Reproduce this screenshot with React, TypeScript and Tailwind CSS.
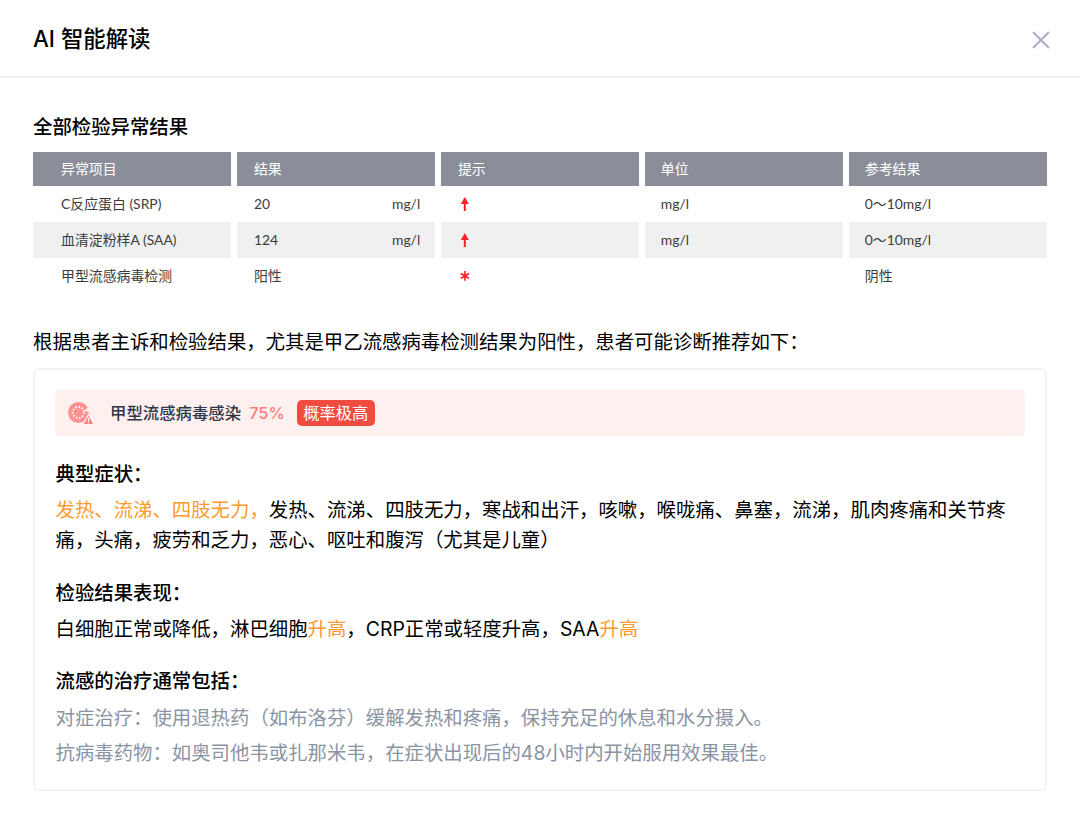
const heads = ["异常项目", "结果", "提示", "单位", "参考结果"];

function Up() {
  return (
    <svg width="10" height="14" viewBox="0 0 10 14" className="block -mt-[1px]">
      <path d="M4.8 0 L8.8 7 L5.8 7 L5.8 14 L3.8 14 L3.8 7 L0.8 7 Z" fill="#ff1f2a" />
    </svg>
  );
}

function Star() {
  return <span className="block text-[28px] leading-none font-bold text-[#ff1f2a] h-[16px] -mt-[3px] -ml-[1px]">*</span>;
}

function Row({ a, b, unit, flag, c, d, alt }: { a: string; b: string; unit?: string; flag: React.ReactNode; c: string; d: string; alt?: boolean }) {
  const cell = `h-9 flex items-center ${alt ? "bg-[#f0f0f0]" : ""}`;
  return (
    <>
      <div className={`${cell} pl-[28px]`}>{a}</div>
      <div className={`${cell} pl-[17px] pr-[15px] justify-between`}>
        <span>{b}</span>
        {unit && <span>{unit}</span>}
      </div>
      <div className={`${cell} pl-[19px]`}>{flag}</div>
      <div className={`${cell} pl-[16px]`}>{c}</div>
      <div className={`${cell} pl-[16px]`}>{d}</div>
    </>
  );
}

export default function App() {
  return (
    <div className="w-[1080px] h-[824px] bg-white font-['Inter','Noto_Sans_CJK_SC',sans-serif] text-black overflow-hidden">
      <header className="h-[78px] border-b-2 border-[#f0f1f4] pl-[33px] pr-[29px] flex items-center justify-between">
        <h1 className="text-[22.4px] font-medium leading-none mt-[3px]">AI 智能解读</h1>
        <svg width="20" height="20" viewBox="0 0 20 20" className="mt-[3px]">
          <path d="M2 2 L18 18 M18 2 L2 18" stroke="#a9b4c2" strokeWidth="2.2" fill="none" />
        </svg>
      </header>

      <main className="px-[33px]">
        <h2 className="mt-[36px] h-[26px] text-[19.4px] leading-[26px] font-medium">全部检验异常结果</h2>

        <div className="mt-[12px] grid grid-cols-5 gap-x-[5.7px] text-[13.9px] text-[#3c3c3c] font-['Lato','Noto_Sans_CJK_SC',sans-serif]">
          <div className="h-[34px] flex items-center pl-[28px] bg-[#8b8e99] text-white">{heads[0]}</div>
          <div className="h-[34px] flex items-center pl-[17px] bg-[#8b8e99] text-white">{heads[1]}</div>
          <div className="h-[34px] flex items-center pl-[17px] bg-[#8b8e99] text-white">{heads[2]}</div>
          <div className="h-[34px] flex items-center pl-[16px] bg-[#8b8e99] text-white">{heads[3]}</div>
          <div className="h-[34px] flex items-center pl-[16px] bg-[#8b8e99] text-white">{heads[4]}</div>
          <Row a="C反应蛋白 (SRP)" b="20" unit="mg/l" flag={<Up />} c="mg/l" d="0～10mg/l" />
          <Row a="血清淀粉样A (SAA)" b="124" unit="mg/l" flag={<Up />} c="mg/l" d="0～10mg/l" alt />
          <Row a="甲型流感病毒检测" b="阳性" flag={<Star />} c="" d="阴性" />
        </div>

        <p className="mt-[32px] mb-[10px] text-[19.4px] leading-[32px]">根据患者主诉和检验结果，尤其是甲乙流感病毒检测结果为阳性，患者可能诊断推荐如下：</p>

        <section className="h-[423px] border-2 border-[#f2f2f2] rounded-[6px] px-[20px] pt-[20px] text-[19.4px]">
          <div className="h-[46px] rounded-[5px] bg-[#fff0f0] flex items-center pl-[13px]">
            <svg width="26" height="24" viewBox="0 0 26 24" className="shrink-0">
              <circle cx="10.5" cy="11.5" r="10.5" fill="#ff9191" />
              <path d="M16 9.5 L22 5.5 L22 11.5 Z" fill="#fff0f0" />
              <circle cx="10.5" cy="11.5" r="5.6" fill="none" stroke="#fff" strokeWidth="1.7" strokeDasharray="1.6 1.6" />
              <path d="M20.5 13.5 L26 23.5 L15 23.5 Z" fill="#ff7d7d" stroke="#fff0f0" strokeWidth="1.2" />
              <path d="M20.5 16.5 V20 M20.5 20.8 V22.2" stroke="#fff" strokeWidth="1.3" />
            </svg>
            <span className="ml-[16px] text-[16.4px] font-medium text-[#2f3648]">甲型流感病毒感染</span>
            <span className="ml-[8px] text-[16.4px] font-medium text-[#ff7d7d]">75%</span>
            <span className="ml-[12px] h-[26px] w-[78px] flex items-center justify-center rounded-[5px] bg-[#f04c40] text-white text-[16.3px]">概率极高</span>
          </div>

          <div className="pl-[0.5px]">
            <h3 className="mt-[22px] leading-[32px] font-medium">典型症状：</h3>
            <p className="mt-[5px] leading-[30px]">
              <span className="text-[#ff9a2e]">发热、流涕、四肢无力，</span>发热、流涕、四肢无力，寒战和出汗，咳嗽，喉咙痛、鼻塞，流涕，肌肉疼痛和关节疼痛，头痛，疲劳和乏力，恶心、呕吐和腹泻（尤其是儿童）
            </p>

            <h3 className="mt-[22px] leading-[32px] font-medium">检验结果表现：</h3>
            <p className="mt-[4px] leading-[32px]">
              白细胞正常或降低，淋巴细胞<span className="text-[#ff9a2e]">升高</span>，CRP正常或轻度升高，SAA<span className="text-[#ff9a2e]">升高</span>
            </p>

            <h3 className="mt-[20px] leading-[32px] font-medium">流感的治疗通常包括：</h3>
            <p className="mt-[4px] leading-[35px] text-[#8a94a3]">
              对症治疗：使用退热药（如布洛芬）缓解发热和疼痛，保持充足的休息和水分摄入。
              <br />
              抗病毒药物：如奥司他韦或扎那米韦，在症状出现后的48小时内开始服用效果最佳。
            </p>
          </div>
        </section>
      </main>
    </div>
  );
}
